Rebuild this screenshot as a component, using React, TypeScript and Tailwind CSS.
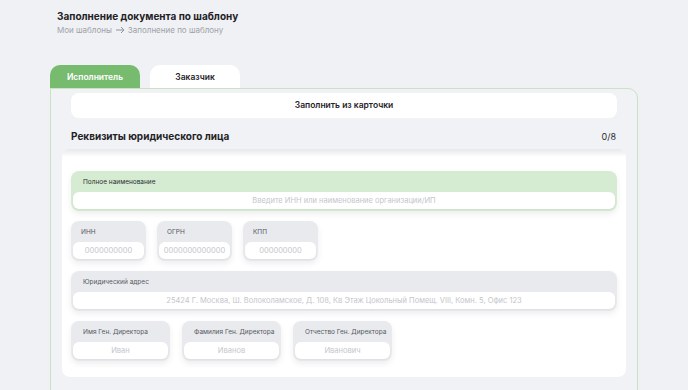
import React from "react";

type Field = { label: string; placeholder: string; w: string };

const small: Field[] = [
  { label: "ИНН", placeholder: "0000000000", w: "w-[75px]" },
  { label: "ОГРН", placeholder: "0000000000000", w: "w-[75px]" },
  { label: "КПП", placeholder: "000000000", w: "w-[75px]" },
];

const directors: Field[] = [
  { label: "Имя Ген. Директора", placeholder: "Иван", w: "w-[99px]" },
  { label: "Фамилия Ген. Директора", placeholder: "Иванов", w: "w-[99px]" },
  { label: "Отчество Ген. Директора", placeholder: "Иванович", w: "w-[99px]" },
];

function Block({
  label,
  placeholder,
  className,
  green,
  wide,
}: {
  label: string;
  placeholder: string;
  className?: string;
  green?: boolean;
  wide?: boolean;
}) {
  return (
    <div
      className={`flex flex-col rounded-[8px] px-[2px] pb-[2px] shadow-[0_3px_6px_rgba(0,0,0,0.07)] ${
        green ? "bg-[#d5ecd2]" : "bg-[#e9eaee]"
      } ${className ?? ""}`}
    >
      <div
        className={`flex h-[21px] items-center pt-[2px] text-[6.5px] ${
          wide ? "pl-[10px]" : "pl-[8px]"
        } ${green ? "text-[#2a2d31]" : "text-[#55595f]"}`}
      >
        {label}
      </div>
      <div className="flex h-[17px] items-center justify-center rounded-[6px] bg-white text-[7.5px] text-[#c3c6cc] shadow-[0_1px_2px_rgba(0,0,0,0.05)]">
        {placeholder}
      </div>
    </div>
  );
}

export default function App() {
  return (
    <div
      className="h-[390px] w-[688px] overflow-hidden bg-[#f0f1f4] px-[50px]"
      style={{ fontFamily: "Inter, 'Noto Sans', sans-serif" }}
    >
      <div className="ml-[7px] pt-[9px]">
        <div className="text-[10px] font-bold leading-[14px] text-[#1f2226]">
          Заполнение документа по шаблону
        </div>
        <div className="mt-[1px] flex items-center gap-[3px] text-[8px] leading-[12px] text-[#9da1a8]">
          <span>Мои шаблоны</span>
          <svg width="10" height="8" viewBox="0 0 10 8" fill="none" stroke="#8f939a" strokeWidth="1">
            <path d="M1 4h8M6 1l3 3-3 3" />
          </svg>
          <span>Заполнение по шаблону</span>
        </div>
      </div>

      <div className="mt-[29px] flex">
        <div className="flex h-[23px] w-[90px] items-center justify-center rounded-t-[10px] bg-[#77bb6f] pt-[1px] text-[8.5px] font-semibold text-white">
          Исполнитель
        </div>
        <div className="ml-[10px] flex h-[23px] w-[90px] items-center justify-center rounded-t-[10px] bg-white pt-[1px] text-[8.5px] font-semibold text-[#1f2226]">
          Заказчик
        </div>
      </div>

      <div className="h-[320px] w-[588px] rounded-tr-[10px] border border-[#c8e4c3] bg-[#f1f2f5] px-[20px] pt-[4px]">
        <div className="flex h-[25px] items-center justify-center rounded-[8px] bg-white text-[8.5px] font-semibold text-[#1f2226]">
          Заполнить из карточки
        </div>
        <div className="mt-[11px] flex items-center justify-between pr-[1px]">
          <div className="text-[10px] font-bold text-[#1f2226]">Реквизиты юридического лица</div>
          <div className="text-[9px] text-[#2a2d31]">0/8</div>
        </div>
        <div className="-mx-[9px] mt-[5px] flex flex-col gap-[10px] rounded-[8px] bg-[linear-gradient(to_bottom,#e7e8ec,#ffffff_8px)] px-[9px] pt-[22px] pb-[16px]">
          <Block green wide label="Полное наименование" placeholder="Введите ИНН или наименование организации/ИП" />
          <div className="flex gap-[11px]">
            {small.map((f) => (
              <Block key={f.label} label={f.label} placeholder={f.placeholder} className={f.w} />
            ))}
          </div>
          <Block
            wide
            label="Юридический адрес"
            placeholder="25424 Г. Москва, Ш. Волоколамское, Д. 108, Кв Этаж Цокольный Помещ. VIII, Комн. 5, Офис 123"
          />
          <div className="flex gap-[12px]">
            {directors.map((f) => (
              <Block key={f.label} wide label={f.label} placeholder={f.placeholder} className={f.w} />
            ))}
          </div>
        </div>
      </div>
    </div>
  );
}
